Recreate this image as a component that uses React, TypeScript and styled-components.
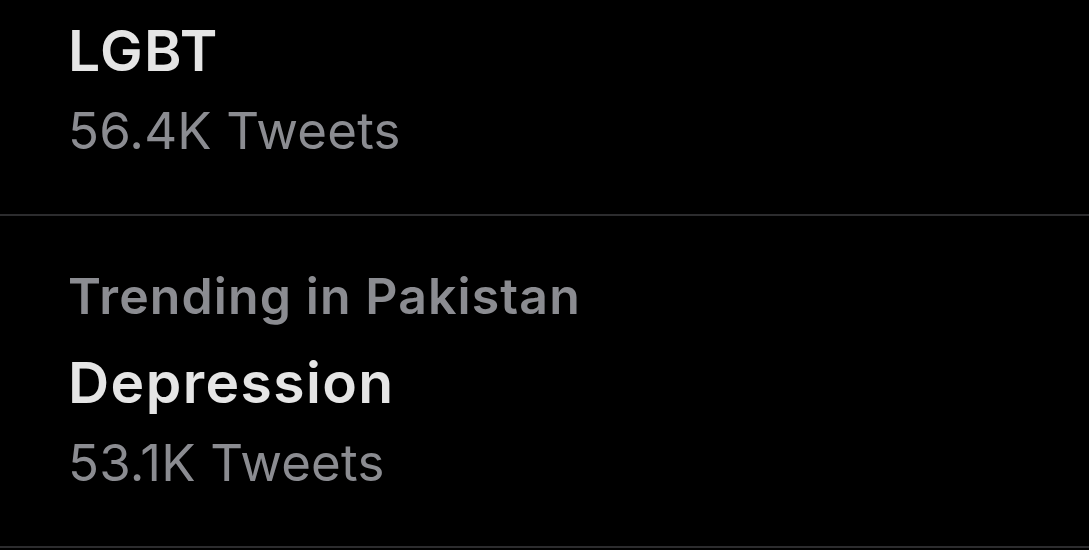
import React from "react";
import styled, { createGlobalStyle } from "styled-components";

const GlobalStyle = createGlobalStyle`
  html, body {
    margin: 0;
    padding: 0;
    background: #000;
  }
  body {
    font-family: Inter, "Liberation Sans", Arial, sans-serif;
    -webkit-font-smoothing: antialiased;
  }
`;

const TrendList = styled.div`
  width: 1089px;
  height: 550px;
  overflow: hidden;
  background: #000;
  display: flex;
  flex-direction: column;
`;

const TrendItem = styled.div<{ $top: number }>`
  display: flex;
  flex-direction: column;
  padding: ${(p) => p.$top}px 0 53px 68px;
  border-bottom: 2px solid #2c2c2e;
`;

const Context = styled.div`
  font-size: 50px;
  line-height: 60px;
  font-weight: 600;
  letter-spacing: 1.1px;
  color: #8b8c91;
  margin-bottom: 24px;
`;

const Title = styled.div`
  font-size: 57px;
  line-height: 66px;
  font-weight: 600;
  letter-spacing: 1.4px;
  color: #e5e5e5;
`;

const Count = styled.div`
  font-size: 51px;
  line-height: 60px;
  font-weight: 400;
  letter-spacing: 0.2px;
  color: #8b8c91;
  margin-top: 17px;
`;

interface Trend {
  context?: string;
  name: string;
  count: string;
}

const trends: Trend[] = [
  { name: "LGBT", count: "56.4K Tweets" },
  { context: "Trending in Pakistan", name: "Depression", count: "53.1K Tweets" },
];

const App: React.FC = () => {
  return (
    <>
      <GlobalStyle />
      <TrendList>
        {trends.map((t, i) => (
          <TrendItem key={i} $top={t.context ? 50 : 18}>
            {t.context && <Context>{t.context}</Context>}
            <Title>{t.name}</Title>
            <Count>{t.count}</Count>
          </TrendItem>
        ))}
      </TrendList>
    </>
  );
};

export default App;
